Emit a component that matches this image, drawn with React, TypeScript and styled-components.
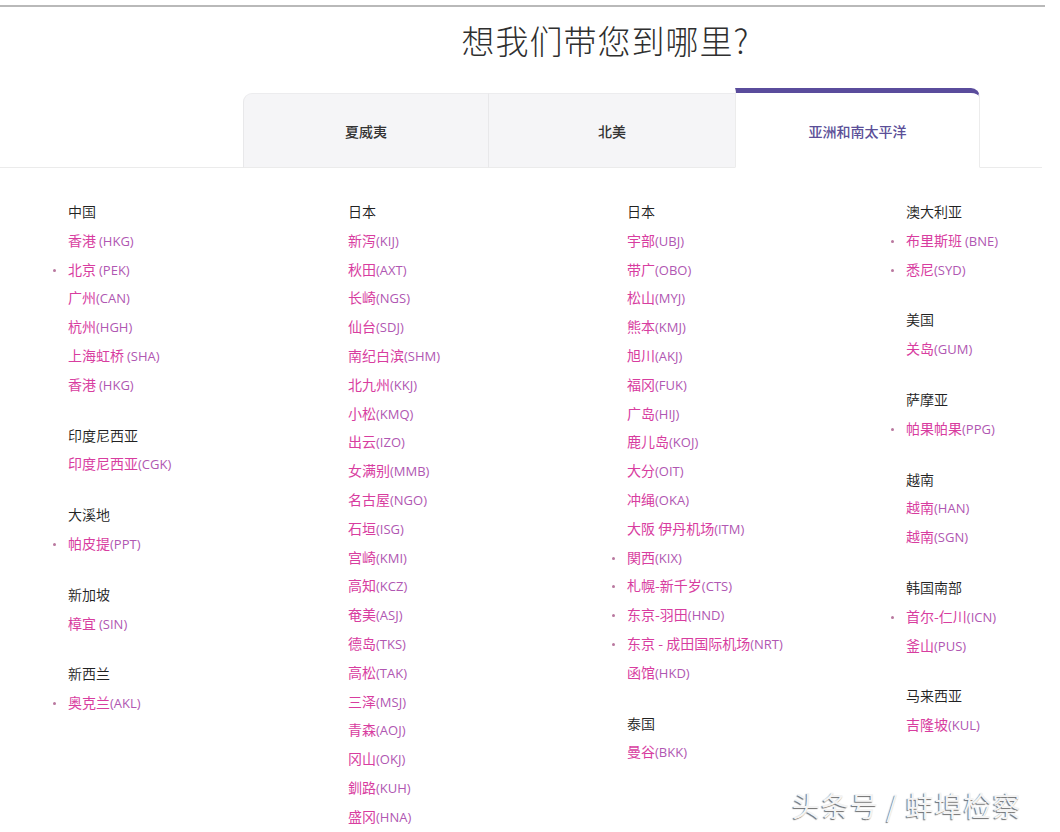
import React from "react";
import styled, { createGlobalStyle } from "styled-components";

interface Airport {
    label: string;
    featured?: boolean;
}

interface Region {
    name: string;
    airports: Airport[];
}

const a = (label: string, featured = false): Airport => ({ label, featured });

const COLUMNS: Region[][] = [
    [
        {
            name: "中国",
            airports: [
                a("香港 (HKG)"),
                a("北京 (PEK)", true),
                a("广州(CAN)"),
                a("杭州(HGH)"),
                a("上海虹桥 (SHA)"),
                a("香港 (HKG)"),
            ],
        },
        { name: "印度尼西亚", airports: [a("印度尼西亚(CGK)")] },
        { name: "大溪地", airports: [a("帕皮提(PPT)", true)] },
        { name: "新加坡", airports: [a("樟宜 (SIN)")] },
        { name: "新西兰", airports: [a("奥克兰(AKL)", true)] },
    ],
    [
        {
            name: "日本",
            airports: [
                a("新泻(KIJ)"),
                a("秋田(AXT)"),
                a("长崎(NGS)"),
                a("仙台(SDJ)"),
                a("南纪白滨(SHM)"),
                a("北九州(KKJ)"),
                a("小松(KMQ)"),
                a("出云(IZO)"),
                a("女满别(MMB)"),
                a("名古屋(NGO)"),
                a("石垣(ISG)"),
                a("宫崎(KMI)"),
                a("高知(KCZ)"),
                a("奄美(ASJ)"),
                a("德岛(TKS)"),
                a("高松(TAK)"),
                a("三泽(MSJ)"),
                a("青森(AOJ)"),
                a("冈山(OKJ)"),
                a("釧路(KUH)"),
                a("盛冈(HNA)"),
            ],
        },
    ],
    [
        {
            name: "日本",
            airports: [
                a("宇部(UBJ)"),
                a("带广(OBO)"),
                a("松山(MYJ)"),
                a("熊本(KMJ)"),
                a("旭川(AKJ)"),
                a("福冈(FUK)"),
                a("广岛(HIJ)"),
                a("鹿儿岛(KOJ)"),
                a("大分(OIT)"),
                a("冲绳(OKA)"),
                a("大阪 伊丹机场(ITM)"),
                a("関西(KIX)", true),
                a("札幌-新千岁(CTS)", true),
                a("东京-羽田(HND)", true),
                a("东京 - 成田国际机场(NRT)", true),
                a("函馆(HKD)"),
            ],
        },
        { name: "泰国", airports: [a("曼谷(BKK)")] },
    ],
    [
        { name: "澳大利亚", airports: [a("布里斯班 (BNE)", true), a("悉尼(SYD)", true)] },
        { name: "美国", airports: [a("关岛(GUM)")] },
        { name: "萨摩亚", airports: [a("帕果帕果(PPG)", true)] },
        { name: "越南", airports: [a("越南(HAN)"), a("越南(SGN)")] },
        { name: "韩国南部", airports: [a("首尔-仁川(ICN)", true), a("釜山(PUS)")] },
        { name: "马来西亚", airports: [a("吉隆坡(KUL)")] },
    ],
];

const TABS = ["夏威夷", "北美", "亚洲和南太平洋"];

const App = () => {
    return (
        <Page>
            <GlobalStyle />
            <TopRule />
            <Header>
                <Title>想我们带您到哪里?</Title>
            </Header>
            <TabBar>
                <TabList>
                    {TABS.map((tab, i) => (
                        <Tab key={tab} $active={i === 2} $first={i === 0}>
                            {tab}
                        </Tab>
                    ))}
                </TabList>
            </TabBar>
            <Columns>
                {COLUMNS.map((regions, ci) => (
                    <Column key={ci}>
                        {regions.map((region) => (
                            <Group key={region.name}>
                                <RegionName>{region.name}</RegionName>
                                {region.airports.map((ap) => {
                                    const idx = ap.label.indexOf("(");
                                    const name = ap.label.slice(0, idx).trimEnd();
                                    const spaced = ap.label[idx - 1] === " ";
                                    const code = ap.label.slice(idx);
                                    return (
                                        <AirportRow key={ap.label} $featured={!!ap.featured}>
                                            <CityName>{name}</CityName>
                                            <CityCode $spaced={spaced}>{code}</CityCode>
                                        </AirportRow>
                                    );
                                })}
                            </Group>
                        ))}
                    </Column>
                ))}
            </Columns>
            <Watermark>头条号 / 蚌埠检察</Watermark>
        </Page>
    );
};

const GlobalStyle = createGlobalStyle`
    html, body {
        margin: 0;
        padding: 0;
        background: #ffffff;
    }
    body {
        font-family: "Noto Sans", "Noto Sans CJK SC", sans-serif;
    }
`;

const Page = styled.div`
    position: relative;
    width: 1060px;
    height: 832px;
    overflow: hidden;
    background: #fff;
`;

const TopRule = styled.div`
    margin-top: 5px;
    width: 1045px;
    height: 2px;
    background: #b9b9b9;
`;

const Header = styled.div`
    margin-left: 243px;
    width: 725px;
    padding-top: 12px;
    display: flex;
    justify-content: center;
`;

const Title = styled.h1`
    margin: 0;
    font-family: "Noto Sans CJK SC", sans-serif;
    font-weight: 300;
    font-size: 33px;
    line-height: 42px;
    color: #2f2f2f;
    letter-spacing: 1px;
`;

const TabBar = styled.div`
    margin-top: 27px;
    width: 1042px;
    border-bottom: 1px solid #ebebeb;
`;

const TabList = styled.div`
    margin-left: 243px;
    width: 737px;
    display: grid;
    grid-template-columns: 245px 247px 245px;
    align-items: end;
    margin-bottom: -1px;
`;

const Tab = styled.div<{ $active: boolean; $first: boolean }>`
    height: ${(p) => (p.$active ? "80px" : "75px")};
    padding-top: ${(p) => (p.$active ? "2px" : "0")};
    display: flex;
    align-items: center;
    justify-content: center;
    font-family: "Noto Sans CJK SC", sans-serif;
    font-size: 14px;
    font-weight: 500;
    box-sizing: border-box;
    color: ${(p) => (p.$active ? "#5b4f98" : "#333")};
    background: ${(p) => (p.$active ? "#fff" : "#f5f5f7")};
    border-left: 1px solid ${(p) => (p.$active ? "#ececec" : "#e8e8ea")};
    border-right: ${(p) => (p.$active ? "1px solid #ececec" : "none")};
    border-top: ${(p) => (p.$active ? "5px solid #5a4c9c" : "1px solid #ececee")};
    border-bottom: 1px solid ${(p) => (p.$active ? "#fff" : "#ebebeb")};
    border-top-left-radius: ${(p) => (p.$first ? "9px" : "0")};
    border-top-right-radius: ${(p) => (p.$active ? "9px" : "0")};
`;

const Columns = styled.div`
    display: grid;
    grid-template-columns: 280px 279px 279px 154px;
    padding-left: 68px;
    padding-top: 29px;
`;

const Column = styled.div`
    display: flex;
    flex-direction: column;
    gap: 22px;
`;

const Group = styled.div`
    display: flex;
    flex-direction: column;
`;

const RegionName = styled.div`
    height: 28.8px;
    font-family: "Noto Sans CJK SC", sans-serif;
    font-size: 14px;
    font-weight: 350;
    line-height: 28.8px;
    color: #222;
`;

const AirportRow = styled.div<{ $featured: boolean }>`
    position: relative;
    height: 28.8px;
    display: flex;
    align-items: baseline;
    white-space: nowrap;
    &::before {
        content: "";
        display: ${(p) => (p.$featured ? "block" : "none")};
        position: absolute;
        left: -15px;
        top: 14px;
        width: 3px;
        height: 3px;
        border-radius: 50%;
        background: #b9789f;
    }
`;

const CityName = styled.span`
    font-family: "Noto Sans CJK SC", sans-serif;
    font-size: 14px;
    line-height: 28.8px;
    color: #d83d9f;
`;

const CityCode = styled.span<{ $spaced: boolean }>`
    margin-left: ${(p) => (p.$spaced ? "3px" : "0")};
    font-family: "Open Sans", "Noto Sans", sans-serif;
    font-size: 13px;
    line-height: 28.8px;
    color: #b057b2;
`;

const Watermark = styled.div`
    position: absolute;
    left: 792px;
    top: 785px;
    font-family: "Noto Sans CJK SC", sans-serif;
    font-size: 28px;
    line-height: 40px;
    color: #f4f4f4;
    letter-spacing: 1px;
    white-space: nowrap;
    text-shadow: -1px 1px 1px #6e6e6e;
`;

export default App;
